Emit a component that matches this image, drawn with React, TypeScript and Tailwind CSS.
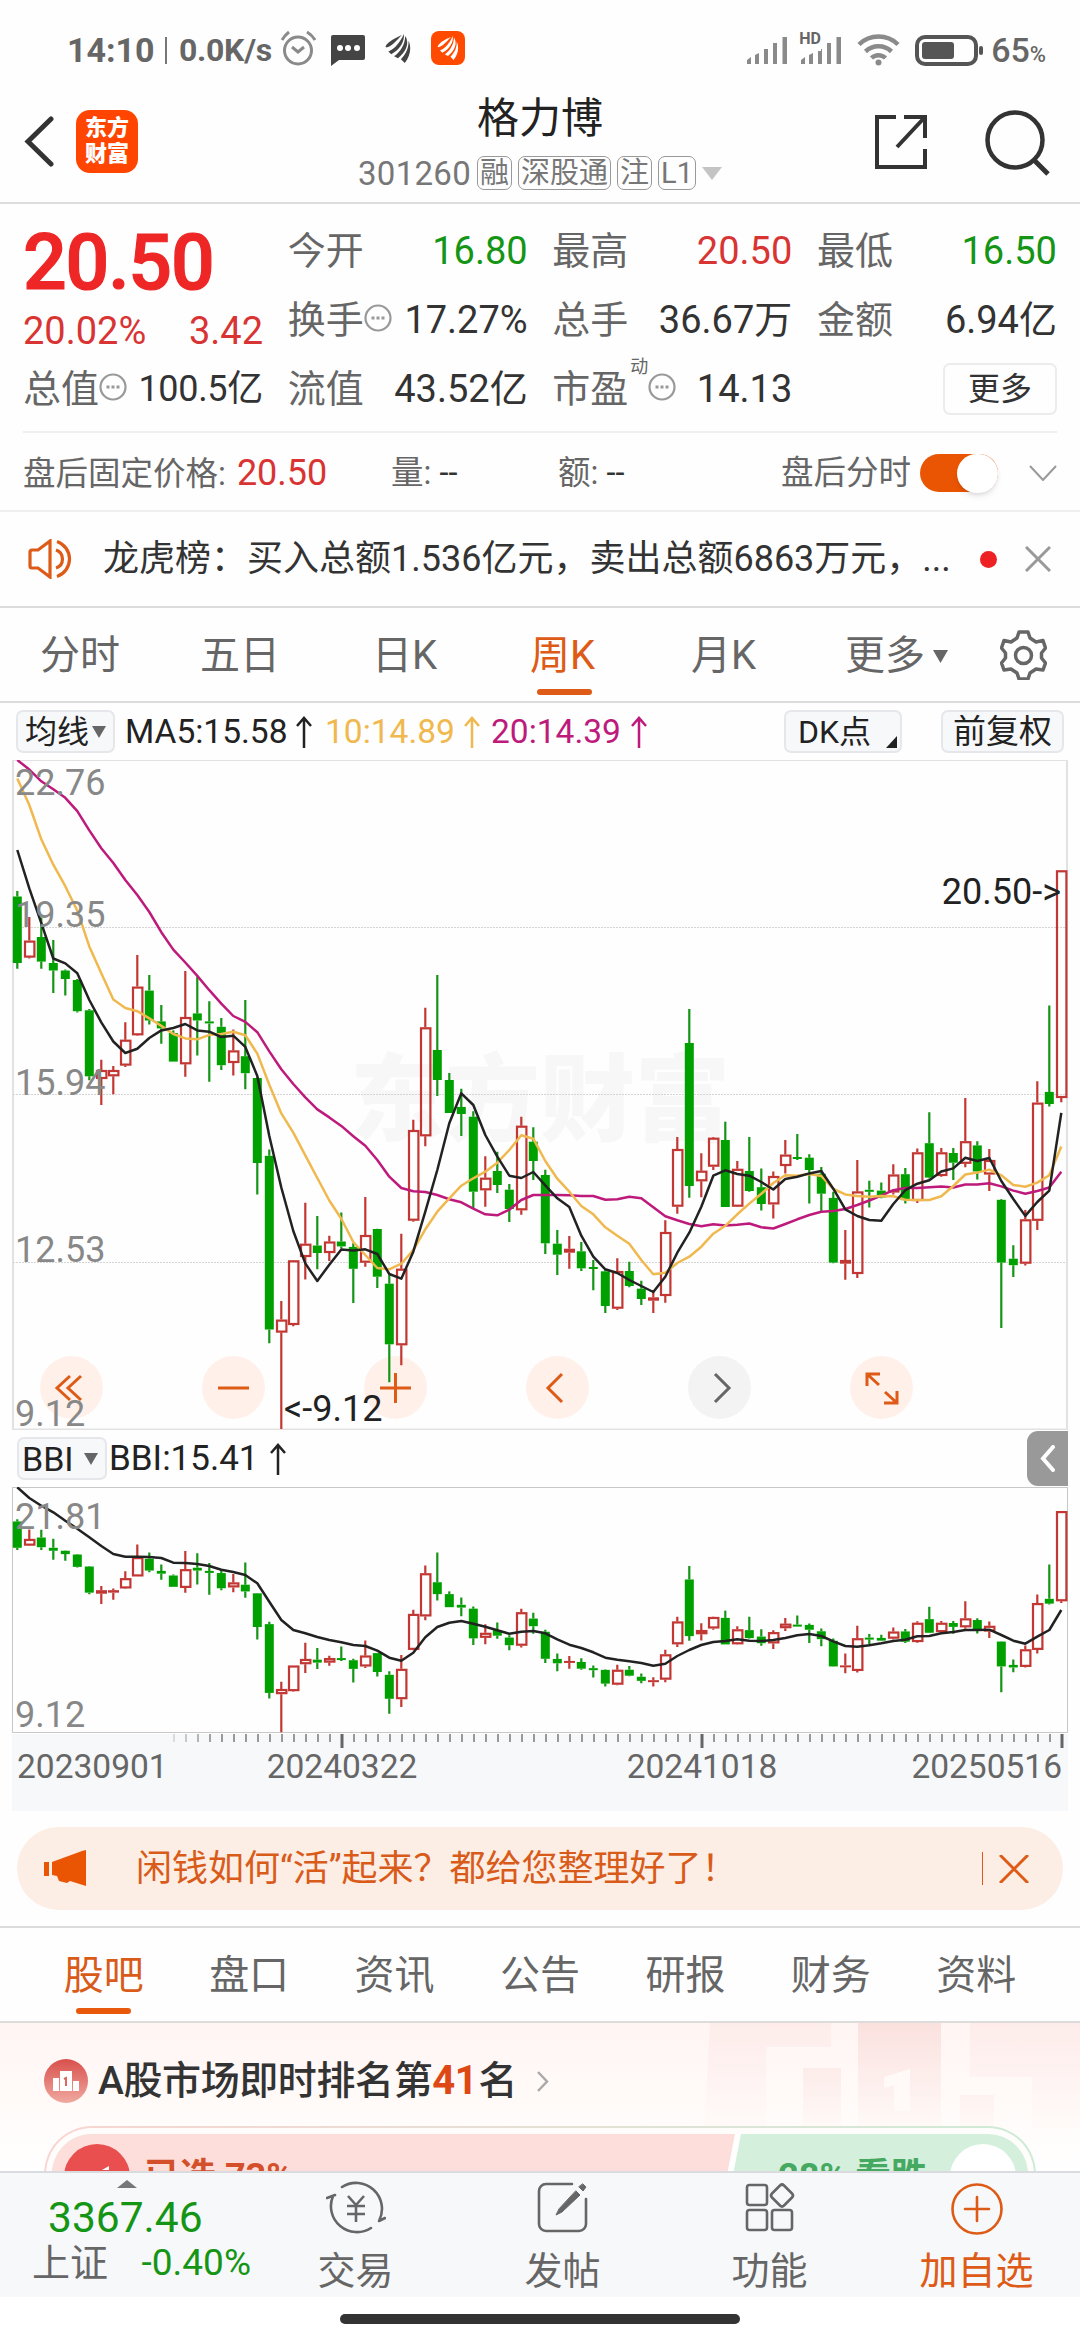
import { Fragment } from 'react';

type Candle = ['r' | 'g', number, number, number, number];

// [colour, high, body top, body bottom, low] measured down from the top of the chart
const candles: Candle[] = [
  ['g', 131, 136.5, 203, 208.8], ['r', 157, 180.6, 197.6, 198.5], ['g', 157.4, 177, 201.6, 208.8], ['g', 180, 203, 210.5, 232.9],
  ['g', 209.6, 210.5, 219, 235.5], ['g', 219, 220, 251.2, 252.5], ['g', 249, 250.3, 316.3, 320.3], ['r', 299.8, 310, 319, 344.9],
  ['r', 306, 310, 316.3, 334.2], ['r', 262.3, 279.7, 305.6, 307], ['r', 195, 226.6, 275.3, 275.7], ['g', 215, 230.6, 260.5, 264.5],
  ['g', 245, 261.4, 268.4, 283.7], ['g', 270.4, 273, 301.6, 301.6], ['r', 211, 257, 304.3, 316.8], ['g', 216.8, 253.4, 260.5, 295.4],
  ['g', 241.3, 261.4, 263.2, 321.7], ['g', 257.9, 266.8, 305.2, 310], ['r', 269.5, 290.4, 303, 315.4], ['g', 240, 296.2, 313.2, 329.3],
  ['g', 317.2, 318, 403, 434.6], ['g', 389.6, 395.8, 569.5, 583.3], ['r', 541, 559.6, 572.6, 669], ['r', 500, 500.3, 565, 566.3],
  ['r', 442.7, 483.7, 497, 519.5], ['g', 456, 485.5, 493, 509.2], ['r', 475.7, 481.5, 493, 501], ['g', 452.5, 481.5, 486.4, 488.6],
  ['g', 483.3, 486.9, 508.8, 543], ['r', 437, 475, 502.7, 506.7], ['g', 468.7, 469, 516.7, 528], ['g', 515, 523.7, 584.3, 622.3],
  ['r', 473.7, 508.7, 585.3, 605.3], ['r', 359.7, 370, 460.7, 461.7], ['r', 247.7, 267.3, 376.3, 386.3], ['g', 215, 290, 320, 336],
  ['g', 313, 320, 353, 353], ['g', 328.7, 347, 354, 376], ['g', 351.3, 356.7, 431.7, 448.3], ['r', 396.3, 417.7, 430.3, 446.7],
  ['g', 391.7, 411, 425, 433], ['g', 424, 429.7, 449, 462], ['r', 356.7, 365.7, 450.3, 454.7], ['g', 367.3, 381.7, 401, 420],
  ['g', 409.7, 415, 483.3, 494], ['g', 470, 483.7, 494.7, 515], ['r', 476, 488.7, 492.7, 508.7], ['g', 482, 491.3, 508.3, 511],
  ['g', 500, 507, 508.5, 530.3], ['g', 510, 511.3, 546, 553], ['r', 498.3, 511, 548.7, 550], ['g', 501.7, 511, 526, 527.3],
  ['g', 520.7, 528.7, 539, 545], ['r', 530, 537.3, 540.7, 553], ['r', 460.3, 472, 536, 542.7], ['r', 377, 389, 446.7, 453.7],
  ['g', 249, 283, 426, 437.7], ['r', 393.3, 410.7, 421.3, 437.3], ['r', 377, 377.7, 406.7, 410], ['g', 361.7, 380, 447, 447],
  ['r', 401, 408.8, 446.7, 447], ['g', 377, 411, 431, 431.8], ['g', 408.4, 427.2, 444, 450.5], ['r', 411.5, 416, 444.4, 458.5],
  ['r', 380, 394.6, 406, 413.4], ['g', 374, 397, 398.5, 400], ['g', 394.2, 397.7, 410, 443.6], ['g', 406.9, 413.8, 433.7, 451.7],
  ['g', 431.8, 437.9, 502.6, 503.3], ['r', 470, 499.9, 503.7, 519.8], ['r', 400, 431.4, 514, 517.9], ['g', 420.7, 429.8, 431.8, 447.4],
  ['g', 422.6, 430.6, 437.5, 438.3], ['r', 404.2, 414.5, 432.5, 434.4], ['g', 408, 414.2, 440.2, 443.6], ['r', 388.5, 392.3, 441, 442.9],
  ['g', 352.2, 383.2, 417.6, 418.4], ['r', 388, 392.3, 416, 416.8], ['g', 388, 393, 402.7, 419.9], ['r', 338, 381.2, 403.8, 407.3],
  ['g', 381.2, 385.4, 411.5, 419.5], ['r', 388.9, 400, 414.5, 431], ['g', 439, 439.8, 502.6, 568], ['g', 485.3, 498.7, 505.2, 517],
  ['r', 450, 459.3, 503.7, 505.6], ['r', 321.2, 342.6, 460.8, 470], ['g', 245.4, 331.9, 344, 346.4], ['r', 110, 110.3, 338, 342.2],
];

const ma5 = [
  90, 128.4, 163.2, 198.5, 203.4, 213.2, 240, 262.3, 281.5, 293, 288.7, 278, 270.4, 268, 264, 270.4, 271.7, 277, 275.7, 286.9, 315.9, 376,
  427.5, 471, 503.4, 521, 504.7, 489.5, 490.4, 489.3, 494, 514, 518.7, 491.7, 451.7, 410, 363.3, 333.3, 345, 375, 396.7, 415.7, 418, 412,
  425.3, 438.3, 447, 475.7, 496.7, 509.3, 513, 520, 526, 532, 516.7, 492.7, 472.7, 446.7, 415.7, 410.3, 414, 415.7, 422, 429.5, 419, 416.8,
  413.4, 411, 428.7, 449.4, 456, 460, 460.8, 444, 430.2, 423.7, 420.3, 411.5, 408.4, 397.7, 401, 398, 421, 439, 455.9, 442, 430.6, 352.9,
];

const ma10 = [
  18.6, 45, 79.3, 104.7, 126.2, 150.7, 186.4, 213.2, 239.6, 248, 251.2, 258.3, 265.9, 274, 278.4, 279.3, 274.8, 273.9, 271.7, 275.3, 293.6,
  324.8, 353.4, 372.6, 395.4, 418, 440.5, 458.8, 482, 495, 508, 509.3, 503.7, 490, 469.3, 451.7, 438.3, 425.7, 418.3, 411.7, 402.7, 390,
  375.3, 378.7, 401, 418.7, 431.7, 446, 454.3, 467.3, 475.7, 483.7, 500, 514.3, 512.7, 503, 496.7, 486.7, 473.7, 465.8, 454.3, 443.6, 433.7,
  423, 415.3, 415.7, 414, 416, 429, 434.4, 436, 436.7, 436, 436.3, 439.8, 440, 440, 436.3, 426, 414.5, 412.6, 409.6, 415.3, 424.9, 426.8,
  422.6, 415.3, 386.6,
];

const ma20 = [
  0, 9.6, 21.3, 29.3, 37.8, 51.2, 70.4, 88.2, 103, 120, 135, 152, 172.2, 189.6, 202.5, 215.9, 230.2, 243.6, 256, 261.9, 272.2, 291.4, 309.2,
  324, 337.3, 349.4, 357.4, 365.9, 376.2, 385.7, 400, 416.7, 428, 431.3, 432, 435, 439.3, 442.3, 448.7, 454.3, 455.3, 449.7, 440, 435, 435,
  435, 435.3, 436, 436, 439.7, 439.3, 436.7, 438.3, 447.3, 456.3, 460.3, 464, 466.3, 464.3, 465.4, 464.7, 463.5, 467.3, 468.5, 464, 459.3,
  455, 451.7, 450.9, 449, 445, 440.5, 435.6, 430.2, 427.9, 427.9, 427.2, 426.4, 427.5, 424.5, 424.5, 423.3, 426.4, 430.6, 433.7, 431, 427.5,
  411.8,
];

const bbi = [
  0.3, 11, 18.7, 25.3, 33.7, 41.7, 50.3, 59, 67, 69.7, 69.7, 70, 71, 75.7, 76, 77, 79, 82.7, 85, 88, 96.3, 114.7, 133, 143, 146.3, 150, 153,
  155.3, 158, 159, 163.7, 170.7, 173.7, 165.7, 150.3, 140, 135.7, 134, 136.7, 139.7, 143.3, 146.7, 144.7, 144, 146.3, 152.3, 157.7, 161,
  165.3, 170.7, 172.7, 174.3, 176, 178.7, 176.7, 169, 163, 158, 155, 154, 152.3, 153.7, 154, 153, 151, 148.3, 147, 149, 154.3, 159, 159.7,
  158.3, 156.3, 154, 152.7, 149.3, 149, 146.3, 145, 143, 143, 142.7, 148, 153.7, 156.7, 149.7, 143, 123,
];

const cx = (i: number) => 17.3 + i * 12;
const line = (ys: number[]) => ys.map((y, i) => `${cx(i)},${y}`).join(' ');

const Candles = ({ scale = 1, shift = 0 }: { scale?: number; shift?: number }) => (
  <>
    {candles.map(([kind, ...vals], i) => {
      const [hi, top, bottom, lo] = vals.map((v) => v * scale + shift);
      const x = cx(i);
      const h = Math.max(bottom - top, 2);
      const color = kind === 'r' ? '#c23733' : '#00a000';
      const wick = kind === 'r' ? '#c23733' : '#159515';
      return (
        <Fragment key={i}>
          <path d={`M${x} ${hi}V${top}M${x} ${top + h}V${Math.max(lo, top + h)}`} stroke={wick} strokeWidth="2.200" />
          {kind === 'r' && h > 4 ? (
            <rect x={x - 4.3} y={top + 1} width="9.4" height={h - 2} fill="none" stroke={color} strokeWidth="2.200" />
          ) : (
            <rect x={x - (kind === 'r' ? 5.3 : 4.5)} y={top} width={kind === 'r' ? 11 : 9} height={h} fill={color} />
          )}
        </Fragment>
      );
    })}
  </>
);

const Dots = () => (
  <svg className="w-7 h-7 shrink-0 -mt-1" viewBox="0 0 28 28" fill="none" stroke="#999" strokeWidth="2.200">
    <circle cx="14" cy="14" r="12.500" />
    <path d="M7.500 14h3M12.500 14h3M17.500 14h3" strokeWidth="3" />
  </svg>
);

const Wing = ({ className }: { className: string }) => (
  <svg className={className} viewBox="0 0 26 30" fill="currentColor">
    <path d="M0 13C3 7 11 4 17 1C12 6 8 12 1 14Z" />
    <path d="M3 18C10 15 15 9 19 0C20 8 15 16 6 21Z" />
    <path d="M9 23C16 18 20 11 20.500 2C25 9 22 18 13 25Z" />
    <path d="M16 26C22 20 24 14 24 7C27 14 26 22 20 30Z" />
  </svg>
);

const Signal = () => (
  <svg className="w-[41px] h-7" viewBox="0 0 41 28" fill="#8a8a8a">
    <path d="M0 28v-4l4-3v7zM8 28v-9l4-2v11zM17 28V13h4v15zM26 28V7h4v21zM35.500 28V1h4.500v27z" />
  </svg>
);

const StatusBar = () => (
  <div className="h-[100px] flex items-center px-[67px] pr-[34px] text-[#666]">
    <span className="text-[34px] font-bold leading-none w-[88px]">14:10</span>
    <span className="w-[2px] h-[27px] bg-[#777] ml-[10px]" />
    <span className="text-[32px] font-bold leading-none ml-3 w-[98px] tracking-[-0.3px]">0.0K/s</span>
    <svg className="w-9 h-9 ml-[3px] -mt-1" viewBox="0 0 36 36" fill="none" stroke="#8a8a8a" strokeWidth="3">
      <circle cx="18" cy="20.500" r="13.500" />
      <path d="M12 17l6 5 6-5M2 10q3-5 7-8M27 2q5 3 8 8" />
    </svg>
    <svg className="w-[34px] h-[31px] ml-[15px]" viewBox="0 0 34 31">
      <path d="M2 0H32a2 2 0 0 1 2 2V23a2 2 0 0 1-2 2H8L0 31V2a2 2 0 0 1 2-2z" fill="#444" />
      <circle cx="9" cy="13" r="3" fill="#fff" />
      <circle cx="17" cy="13" r="3" fill="#fff" />
      <circle cx="26" cy="13" r="3" fill="#fff" />
    </svg>
    <Wing className="w-[26px] h-[29px] ml-5 -mt-1 text-[#444]" />
    <div className="w-[34px] h-[34px] ml-5 -mt-1 rounded-[8px] bg-[#ff4a00] flex items-center justify-center">
      <Wing className="w-[22px] h-[24px] text-white" />
    </div>
    <div className="ml-auto flex items-center">
      <Signal />
      <div className="relative ml-[13px] flex">
        <Signal />
        <span className="absolute -left-[2px] -top-[5px] text-[16px] font-bold leading-none bg-white pb-1">HD</span>
      </div>
      <svg className="w-[43px] h-[32px] ml-[15px]" viewBox="0 0 43 32" fill="none" stroke="#8a8a8a" strokeWidth="4.500">
        <path d="M2 10.500a28 28 0 0 1 39 0M8.500 17.500a19 19 0 0 1 26 0M14.500 24a10 10 0 0 1 14 0" />
        <circle cx="21.500" cy="28.500" r="3" fill="#8a8a8a" stroke="none" />
      </svg>
      <svg className="w-[68px] h-[31px] ml-[15px]" viewBox="0 0 68 31">
        <rect x="2" y="2" width="59" height="27" rx="8" fill="none" stroke="#555" strokeWidth="4" />
        <rect x="7" y="7" width="32" height="17" rx="3" fill="#555" />
        <rect x="64" y="11" width="4" height="9" rx="2" fill="#555" />
      </svg>
      <span className="text-[34px] font-medium leading-none ml-2">
        65<span className="text-[22px]">%</span>
      </span>
    </div>
  </div>
);

const Tag = ({ children }: { children: string }) => (
  <span className="h-[34px] px-[2px] border-[1.5px] border-[#999] rounded-[7px] flex items-center text-[29px] leading-none whitespace-nowrap">{children}</span>
);

const Header = () => (
  <header className="h-[104px] border-b-2 border-[#dcdcdc] flex justify-between px-6">
    <div className="flex items-center gap-[22px] w-[330px] pb-[20px]">
      <svg className="w-[30px] h-[52px]" viewBox="0 0 30 52" fill="none" stroke="#333" strokeWidth="5" strokeLinecap="round">
        <path d="M27 4L4 26.500L27 49" />
      </svg>
      <div className="w-[62px] h-[63px] rounded-[14px] bg-[#ff4500] text-white text-[22px] leading-[26px] font-black flex flex-col items-center justify-center">
        <span>东方</span>
        <span>财富</span>
      </div>
    </div>
    <div className="flex flex-col items-center">
      <h1 className="text-[42px] leading-[42px] mt-[-2px] text-[#222]">格力博</h1>
      <div className="flex items-center gap-[6px] mt-[16px] text-[#777]">
        <span className="text-[33px] leading-none tracking-[0.3px]">301260</span>
        <Tag>融</Tag>
        <Tag>深股通</Tag>
        <Tag>注</Tag>
        <Tag>L1</Tag>
        <svg className="w-5 h-[13px]" viewBox="0 0 20 13" fill="#c4c4c4"><path d="M0 0h20l-10 13z" /></svg>
      </div>
    </div>
    <div className="flex justify-end gap-[56px] w-[330px] pr-[6px] pt-[10px]">
      <svg className="w-[55px] h-[60px]" viewBox="0 0 55 60" fill="none" stroke="#333" strokeWidth="4">
        <path d="M23 7H4V57H52V39M31 7H52V28M52 7L24 37" />
      </svg>
      <svg className="w-[66px] h-[66px]" viewBox="0 0 66 66" fill="none" stroke="#333" strokeWidth="4.500">
        <circle cx="31" cy="30" r="27.500" />
        <path d="M50 50L64 64" strokeWidth="5" />
      </svg>
    </div>
  </header>
);

type PairProps = { label: string; value: string; color?: string; dots?: boolean; sup?: string; narrow?: boolean };

const Pair = ({ label, value, color = 'text-[#333]', dots, sup, narrow }: PairProps) => (
  <div className="flex items-center h-[69px]">
    <span className="text-[38px] text-[#666]">{label}</span>
    {sup && <span className="text-[18px] text-[#666] self-start leading-none mt-1 ml-[2px]">{sup}</span>}
    {dots && <Dots />}
    <span className={`ml-auto ${narrow ? 'text-[36px] tracking-[-0.3px]' : 'text-[38px]'} ${color}`}>{value}</span>
  </div>
);

const Quote = () => (
  <section className="px-[23px]">
    <div className="h-[229px] pt-3 flex justify-between border-b-2 border-[#efefef] leading-none">
      <div className="w-[240px]">
        <div className="h-[92px] pt-[9px] text-[77px] font-medium [-webkit-text-stroke:1.2px_#ee2626] tracking-[-1.2px] text-[#ee2626]">20.50</div>
        <div className="h-[46px] flex items-center justify-between text-[38px] text-[#d93434]">
          <span>20.02%</span>
          <span>3.42</span>
        </div>
        <Pair label="总值" value="100.5亿" dots narrow />
      </div>
      <div className="w-[240px]">
        <Pair label="今开" value="16.80" color="text-[#159515]" />
        <Pair label="换手" value="17.27%" dots />
        <Pair label="流值" value="43.52亿" />
      </div>
      <div className="w-[240px]">
        <Pair label="最高" value="20.50" color="text-[#d93434]" />
        <Pair label="总手" value="36.67万" />
        <Pair label="市盈" value="14.13" dots sup="动" />
      </div>
      <div className="w-[240px]">
        <Pair label="最低" value="16.50" color="text-[#159515]" />
        <Pair label="金额" value="6.94亿" />
        <div className="h-[69px] flex items-center justify-end">
          <span className="w-[114px] h-[52px] border-2 border-[#ececec] rounded-[7px] flex items-center justify-center text-[32px] text-[#333]">更多</span>
        </div>
      </div>
    </div>
    <div className="h-[77px] pt-[3px] flex items-center text-[32.5px] leading-none text-[#666]">
      <div className="w-[368px] whitespace-nowrap">盘后固定价格:<span className="ml-[11px] text-[36px] text-[#d93434]">20.50</span></div>
      <div className="w-[167px]">量: <span className="text-[#333]">--</span></div>
      <div className="w-[223px]">额: <span className="text-[#333]">--</span></div>
      <span>盘后分时</span>
      <div className="w-[78px] h-[38px] rounded-full bg-[#ea5504] ml-[9px] flex items-center justify-end">
        <span className="w-[41px] h-[39px] rounded-full bg-white shadow-md" />
      </div>
      <svg className="w-[28px] h-[16px] ml-auto" viewBox="0 0 28 16" fill="none" stroke="#999" strokeWidth="2"><path d="M1 1l13 14L27 1" /></svg>
    </div>
  </section>
);

const News = () => (
  <div className="h-[98px] border-y-2 border-t-[#efefef] border-b-[#dcdcdc] flex items-center pl-7 pr-[29px] text-[36px] leading-none text-[#333]">
    <svg className="w-[46px] h-[40px] shrink-0" viewBox="0 0 46 40" fill="none" stroke="#dd5b16" strokeWidth="3.200">
      <path d="M22 2V38L10 29H4a2 2 0 0 1-2-2V13a2 2 0 0 1 2-2h6zM28 11a9.500 9.500 0 0 1 0 18M29 2.500a18.500 18.500 0 0 1 0 35" />
    </svg>
    <span className="ml-[29px] whitespace-nowrap">龙虎榜：买入总额1.536亿元，卖出总额6863万元，...</span>
    <span className="w-[17px] h-[17px] rounded-full bg-[#ee2222] ml-auto" />
    <svg className="w-[26px] h-[26px] ml-[28px]" viewBox="0 0 26 26" stroke="#999" strokeWidth="3"><path d="M1 1l24 24M25 1L1 25" /></svg>
  </div>
);

const Periods = () => (
  <nav className="h-[95px] pt-[3px] border-b-2 border-[#dcdcdc] flex items-center text-[40px] leading-none text-[#666] pl-10 pr-[33px]">
    <span className="w-[160px]">分时</span>
    <span className="w-[172px]">五日</span>
    <span className="w-[158px]">日K</span>
    <span className="w-[161px] h-full relative flex items-center text-[#dd5b16]">
      周K
      <span className="absolute left-[7px] bottom-[6px] w-[55px] h-[6px] rounded-full bg-[#dd5b16]" />
    </span>
    <span className="w-[154px]">月K</span>
    <span>更多</span>
    <svg className="w-[15px] h-[13px] ml-2" viewBox="0 0 15 13" fill="#666"><path d="M0 0h15L7.500 13z" /></svg>
    <svg className="w-[47px] h-[50px] ml-auto -mt-[3px]" viewBox="0 0 47 50" fill="none" stroke="#666" strokeWidth="3.500" strokeLinejoin="round">
      <path d="M19 2h9l2 6 6 4 7-1.500 2.500 7.500-4 5v5l4 5-2.500 7-7-1-6 4-2 6h-9l-2-6-6-4-7 1L1.500 33l4-5v-5l-4-5L4 10.500 11 12l6-4z" />
      <circle cx="23.500" cy="25.500" r="8" />
    </svg>
  </nav>
);

const Up = ({ className = '' }: { className?: string }) => (
  <svg className={`w-[16px] h-[32px] shrink-0 ${className}`} viewBox="0 0 16 32" fill="none" stroke="currentColor" strokeWidth="2.500"><path d="M8 32V2M1 10L8 2l7 8" /></svg>
);

const Toolbar = () => (
  <div className="h-[57px] flex items-center pl-4 pr-4 text-[33.5px] leading-none text-[#222] whitespace-nowrap">
    <span className="w-[99px] h-[43px] bg-[#f7f8fa] border-2 border-[#e6e7ea] rounded-[7px] flex items-center pl-[7px] text-[32px]">
      均线<svg className="w-[14px] h-[12px] ml-[3px]" viewBox="0 0 14 12" fill="#666"><path d="M0 0h14L7 12z" /></svg>
    </span>
    <span className="ml-[10px] w-[162px]">MA5:15.58</span>
    <Up className="ml-[9px]" />
    <span className="ml-[13px] w-[131px] text-[#f0b94f]">10:14.89</span>
    <Up className="ml-[8px] text-[#f0b94f]" />
    <span className="ml-[11px] w-[131px] text-[#bd1a7c]">20:14.39</span>
    <Up className="ml-[9px] text-[#bd1a7c]" />
    <span className="ml-auto w-[118px] h-[43px] bg-[#f7f8fa] border-2 border-[#e6e7ea] rounded-[7px] flex items-center pl-3 relative text-[32px]">
      DK点
      <svg className="absolute right-[3px] bottom-[3px] w-[11px] h-[12px]" viewBox="0 0 11 12" fill="#222"><path d="M11 0v12H0z" /></svg>
    </span>
    <span className="ml-[39px] w-[123px] h-[43px] bg-[#f7f8fa] border-2 border-[#e6e7ea] rounded-[7px] flex items-center justify-center text-[33px]">前复权</span>
  </div>
);

const chartButtons = [
  { name: 'first', d: 'M30 20L17 32l13 12M41 20L28 32l13 12' },
  { name: 'minus', d: 'M16 32h31' },
  { name: 'plus', d: 'M16 32h31M31.500 17v30' },
  { name: 'prev', d: 'M36 18L22 32l14 14' },
  { name: 'next', d: 'M27 18l14 14-14 14' },
  { name: 'expand', d: 'M17 30V18h13M17 18l12 11M47 35v12H34M47 47L35 36' },
];

const MainChart = () => (
  <div className="relative">
    <svg className="block w-[1080px] h-[670px]" viewBox="0 0 1080 670" fontFamily='Roboto, "Noto Sans CJK SC", sans-serif'>
      <text x="350" y="374" fontSize="95" fontWeight="900" fill="#f7f7f7">东方财富</text>
      <path d="M13 0V669.500H1067V0Z" fill="none" stroke="#e2e2e2" strokeWidth="2" />
      <path d="M13 167.500H1067M13 334.500H1067M13 502.500H1067" stroke="#d4d4d4" strokeWidth="1" strokeDasharray="2 1" />
    </svg>
    <div className="absolute left-[40px] top-[596px] flex gap-[99px]">
      {chartButtons.map((b) => (
        <span key={b.name} className={`w-[63px] h-[63px] rounded-full ${b.name === 'next' ? 'bg-[#f3f3f3] text-[#666]' : 'bg-[#fff1ea] text-[#dd5b16]'}`}>
          <svg viewBox="0 0 63 63" fill="none" stroke="currentColor" strokeWidth="3"><path d={b.d} /></svg>
        </span>
      ))}
    </div>
    <svg className="absolute left-0 top-0 w-[1080px] h-[670px]" viewBox="0 0 1080 670" fontFamily='Roboto, "Noto Sans CJK SC", sans-serif'>
      <Candles />
      <g fill="none" strokeWidth="2.500" strokeLinejoin="round">
        <polyline points={line(ma20)} stroke="#bd1a7c" />
        <polyline points={line(ma10)} stroke="#f0b94f" />
        <polyline points={line(ma5)} stroke="#222" />
      </g>
      <g fontSize="36" fill="#888">
        <text x="15" y="34.600">22.76</text>
        <text x="15" y="167">19.35</text>
        <text x="15" y="334.600">15.94</text>
        <text x="15" y="502">12.53</text>
        <text x="15" y="665.500">9.12</text>
      </g>
      <g fontSize="36" fill="#222">
        <text x="284" y="660.500">&lt;-9.12</text>
        <text x="1061" y="143.500" textAnchor="end">20.50-&gt;</text>
      </g>
    </svg>
  </div>
);

const BbiBar = () => (
  <div className="h-[57px] flex items-center pl-[17px] pr-3 text-[35px] leading-none text-[#222]">
    <span className="w-[90px] h-[43px] bg-[#f7f8fa] border-2 border-[#e6e7ea] rounded-[7px] flex items-center pl-[3px] pr-[7px] justify-between text-[34px]">
      BBI<svg className="w-[14px] h-[12px]" viewBox="0 0 14 12" fill="#666"><path d="M0 0h14L7 12z" /></svg>
    </span>
    <span className="ml-[2px] w-[148px]">BBI:15.41</span>
    <Up className="ml-[13px]" />
    <span className="ml-auto w-[41px] h-[55px] rounded-l-[11px] bg-[#999] flex items-center justify-center">
      <svg className="w-[16px] h-[27px]" viewBox="0 0 16 27" fill="none" stroke="#fff" strokeWidth="4" strokeLinecap="round"><path d="M13 2L3 13.500 13 25" /></svg>
    </span>
  </div>
);

const ticks = Array.from({ length: 75 }, (_, k) => k);

const BbiChart = () => (
  <svg className="block w-[1080px] h-[324px]" viewBox="0 0 1080 324" fontFamily="Roboto, sans-serif">
    <rect x="12" y="247" width="1056" height="77" fill="#f7f8fa" />
    <rect x="12.500" y="0.500" width="1055" height="245" fill="none" stroke="#c8c8c8" />
    <Candles scale={0.396} shift={-19.6} />
    <polyline points={line(bbi)} fill="none" stroke="#222" strokeWidth="2.500" strokeLinejoin="round" />
    {ticks.map((k) => {
      const major = [14, 44, 74].includes(k);
      return <path key={k} d={`M${174 + k * 12} 247v${major ? 14 : 8}`} stroke={major ? '#666' : '#999'} strokeWidth={major ? 3 : 2} opacity={Math.min(1, 0.3 + k * 0.2)} />;
    })}
    <g fontSize="36" fill="#888">
      <text x="15" y="41.500">21.81</text>
      <text x="15" y="240">9.12</text>
    </g>
    <g fontSize="33.500" fill="#666">
      <text x="17" y="291">20230901</text>
      <text x="342" y="291" textAnchor="middle">20240322</text>
      <text x="702" y="291" textAnchor="middle">20241018</text>
      <text x="1062" y="291" textAnchor="end">20250516</text>
    </g>
  </svg>
);

const Banner = () => (
  <div className="h-[115px] px-[17px] flex items-center">
    <div className="h-[83px] w-full rounded-full bg-[#fdeee5] flex items-center pl-[27px] pr-[34px] text-[#d95b1a]">
      <svg className="w-[42px] h-[37px]" viewBox="0 0 42 37" fill="#ea5504">
        <path d="M0 12h5v14H0zM8 12L38 1l4-1V36L26 31l-3 2-8-2-2-5-5-1z" />
      </svg>
      <span className="ml-[50px] text-[36px] leading-none">闲钱如何“活”起来？都给您整理好了！</span>
      <span className="ml-auto w-px h-[33px] bg-[#d95b1a]" />
      <svg className="w-[30px] h-[28px] ml-4" viewBox="0 0 30 28" stroke="#dd5b16" strokeWidth="3"><path d="M1 0l28 28M29 0L1 28" /></svg>
    </div>
  </div>
);

const sections = ['股吧', '盘口', '资讯', '公告', '研报', '财务', '资料'];

const SectionTabs = () => (
  <nav className="h-[97px] pt-[2px] border-y-2 border-[#dcdcdc] flex px-[31px] text-[40px] leading-none text-[#666]">
    {sections.map((s, i) => (
      <span key={s} className={`flex-1 relative flex items-center justify-center ${i === 0 ? 'text-[#d95b1a]' : ''}`}>
        {s}
        {i === 0 && <span className="absolute bottom-[7px] w-[55px] h-[6px] rounded-full bg-[#e8590c]" />}
      </span>
    ))}
  </nav>
);

const Rank = () => (
  <section className="h-[148px] overflow-hidden bg-gradient-to-b from-[#fff5f3] via-[#fffaf8] to-white relative">
    <svg className="absolute right-0 top-0 w-[380px] h-[105px]" viewBox="0 0 380 105">
      <defs>
        <linearGradient id="podium" x1="0" y1="0" x2="0" y2="1">
          <stop offset="0" stopColor="#f9dcd9" />
          <stop offset="1" stopColor="#fff9f7" />
        </linearGradient>
        <linearGradient id="podiumBack" x1="0" y1="0" x2="0" y2="1">
          <stop offset="0" stopColor="#fdecea" />
          <stop offset="1" stopColor="#fffaf9" />
        </linearGradient>
      </defs>
      <path d="M10 0h121v24H66v81H4zM270 0h110v105H332V54H270z" fill="url(#podiumBack)" />
      <path d="M158 0h83v105h-83zM103 45h38v60h-38zM260 72h34v33h-34z" fill="url(#podium)" opacity=".8" />
      <path d="M184 54l26-8v42h-16V62l-10 3z" fill="#fffaf8" />
    </svg>
    <div className="relative flex items-center h-[60px] mt-7 pl-[44px] text-[39px] leading-none font-medium text-[#333]">
      <svg className="w-11 h-11" viewBox="0 0 44 44">
        <defs>
          <linearGradient id="badge" x1="0" y1="0" x2="0" y2="1">
            <stop offset="0" stopColor="#d8504c" />
            <stop offset="1" stopColor="#f0a9a0" />
          </linearGradient>
        </defs>
        <circle cx="22" cy="22" r="22" fill="url(#badge)" />
        <path d="M9 19h6v13H9zM16 12h12v20H16zM29 22h6v10h-6z" fill="#fff" />
        <path d="M20 20l2-1v8" stroke="#dd6660" strokeWidth="2" fill="none" />
      </svg>
      <span className="ml-[10px] whitespace-nowrap tracking-[-0.4px]">A股市场即时排名第<b className="text-[#dd4814] text-[40px] mr-[1px]">41</b>名</span>
      <svg className="w-3 h-[21px] ml-[20px]" viewBox="0 0 12 21" fill="none" stroke="#aaa" strokeWidth="2.500"><path d="M1 1l9 9.500L1 20" /></svg>
    </div>
    <div className="relative mt-[15px] mx-[44px] h-[100px] rounded-t-[48px] p-[2px] bg-gradient-to-r from-[#f9d5d2] to-[#cdebd6]">
      <div className="h-full rounded-t-[46px] bg-[#fffdfc] p-[6px]">
        <div className="h-full rounded-t-[40px] overflow-hidden flex relative bg-[#d5efdd]">
          <svg className="absolute inset-0 w-[976px] h-[92px]" viewBox="0 0 976 92">
            <path d="M0 0H683L665 92H0z" fill="#fddeda" />
            <path d="M683 0h6L671 92h-6z" fill="#fff" />
            <circle cx="45" cy="43" r="33" fill="#e94f4f" />
            <path d="M50 36l7-4v4z" fill="#fff" />
            <circle cx="931" cy="43" r="33" fill="#fff" />
          </svg>
          <span className="relative ml-[92px] mt-[25px] text-[36px] leading-none font-bold text-[#d4502a]">已选 73%</span>
          <span className="relative ml-auto mr-[101px] mt-[25px] text-[36px] leading-none font-bold text-[#45a962]">28% 看跌</span>
        </div>
      </div>
    </div>
  </section>
);

const NavItem = ({ label, children, active }: { label: string; children: React.ReactNode; active?: boolean }) => (
  <div className={`w-[207px] flex flex-col items-center ${active ? 'text-[#dd5b16]' : 'text-[#666]'}`}>
    <svg className="w-[60px] h-[60px] mt-[6px]" viewBox="0 0 60 60" fill="none" stroke="currentColor" strokeWidth="2.600" strokeLinecap="round" strokeLinejoin="round">
      {children}
    </svg>
    <span className="text-[38px] leading-none mt-[13px]">{label}</span>
  </div>
);

const BottomNav = () => (
  <footer className="h-[126px] border-t-2 border-[#d9dbdf] bg-[#f7f8fa] flex">
    <div className="w-[252px] leading-none text-[#159515]">
      <svg className="w-[20px] h-[8px] mt-[7px] ml-[117px]" viewBox="0 0 20 8" fill="#777"><path d="M10 0l10 8H0z" /></svg>
      <div className="text-[42.5px] mt-[9px] pl-[48px]">3367.46</div>
      <div className="flex items-center justify-between pl-8 pr-[1px] mt-[4px] text-[37px]">
        <span className="text-[38px] text-[#666]">上证</span>
        <span>-0.40%</span>
      </div>
    </div>
    <NavItem label="交易">
      <path d="M16 8A26 26 0 0 1 53 42l6-3M7 17A26 26 0 0 0 45 49M1 19l8-3" />
      <path d="M22 17l8 9 8-9M30 26v17M21 27h18M21 35h18" strokeLinecap="butt" />
    </NavItem>
    <NavItem label="发帖">
      <path d="M39 5H13a7 7 0 0 0-7 7V45a7 7 0 0 0 7 7H46a7 7 0 0 0 7-7V20" />
      <path d="M43 12l4 4-18 17-6 3 3-6zM50 5l3 3-3 4-4-4z" fill="currentColor" strokeWidth="1" />
    </NavItem>
    <NavItem label="功能">
      <rect x="7" y="6" width="20" height="20" rx="2.500" />
      <rect x="7" y="31" width="20" height="20" rx="2.500" />
      <rect x="32" y="31" width="20" height="20" rx="2.500" />
      <path d="M40 6.500q2-2 4 0l8 8q2 2 0 4l-8 8q-2 2-4 0l-8-8q-2-2 0-4z" />
    </NavItem>
    <NavItem label="加自选" active>
      <circle cx="30" cy="30" r="24.500" />
      <path d="M18 30h24M30 18v24" />
    </NavItem>
  </footer>
);

export default function App() {
  return (
    <div className="w-[1080px] h-[2340px] overflow-hidden bg-[#fefefe] font-[Roboto,'Noto_Sans_CJK_SC',sans-serif]">
      <StatusBar />
      <Header />
      <Quote />
      <News />
      <Periods />
      <Toolbar />
      <MainChart />
      <BbiBar />
      <BbiChart />
      <Banner />
      <SectionTabs />
      <Rank />
      <BottomNav />
      <div className="h-[44px] bg-white flex justify-center pt-[17px]">
        <div className="w-[400px] h-[10px] rounded-full bg-[#333]" />
      </div>
    </div>
  );
}
